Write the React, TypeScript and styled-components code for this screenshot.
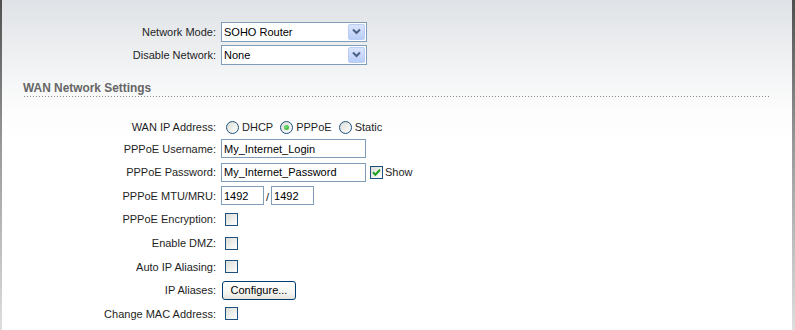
import React from 'react';
import styled, { createGlobalStyle } from 'styled-components';

const GlobalStyle = createGlobalStyle`
  html, body {
    margin: 0;
    padding: 0;
    background: #ffffff;
  }
  body {
    font-family: 'Liberation Sans', Arial, sans-serif;
    font-size: 11px;
    color: #222222;
  }
`;

const Frame = styled.div`
  box-sizing: border-box;
  width: 795px;
  height: 330px;
  overflow: hidden;
  border-style: solid;
  border-width: 0 3px 0 2px;
  border-image: linear-gradient(to bottom, #4f4f4f, #9a9a9a 45%, #dedede) 1;
  background: linear-gradient(to bottom, #dfe2e6 0px, #f6f7f8 85px, #fcfcfc 110px, #ffffff 140px);
  padding-top: 20px;
`;

const Form = styled.div<{ $top?: number }>`
  display: grid;
  grid-template-columns: 214px 1fr;
  column-gap: 5px;
  margin-top: ${p => p.$top ?? 0}px;
`;

const Row = styled.div<{ $h: number }>`
  display: contents;
  & > * {
    height: ${p => p.$h}px;
  }
`;

const Label = styled.div`
  display: flex;
  align-items: center;
  justify-content: flex-end;
  white-space: nowrap;
  color: #1e1e1e;
`;

const Field = styled.div`
  display: flex;
  align-items: center;
  white-space: nowrap;
`;

const SectionHeader = styled.div`
  margin: 16px 22px 0 21px;
  padding: 0 0 1px 0;
  font-weight: bold;
  font-size: 11.9px;
  line-height: 13px;
  color: #666666;
  background-image: linear-gradient(to right, #8a8a8a 1px, transparent 1px);
  background-size: 3px 1px;
  background-repeat: repeat-x;
  background-position: 1px bottom;
  height: 14px;
`;

const SelectBox = styled.div<{ $w: number }>`
  box-sizing: border-box;
  width: ${p => p.$w}px;
  height: 20px;
  border: 1px solid #7f9db9;
  background: #ffffff;
  display: flex;
  align-items: center;
  justify-content: space-between;
  padding: 0 1px 0 2px;
  color: #000000;
`;

const ArrowButton = styled.div`
  box-sizing: border-box;
  width: 17px;
  height: 16px;
  border: 1px solid #b9cdf5;
  border-radius: 2px;
  background: linear-gradient(to bottom, #dbe5fd, #b9cdf7);
  display: flex;
  align-items: center;
  justify-content: center;
`;

const TextInput = styled.div<{ $w: number }>`
  box-sizing: border-box;
  width: ${p => p.$w}px;
  height: 19px;
  border: 1px solid #7f9db9;
  background: #ffffff;
  padding: 0 2px;
  display: flex;
  align-items: center;
  color: #000000;
`;

const Slash = styled.span`
  margin: 0 2px 0 2px;
  padding-top: 2px;
`;

const Box = styled.span<{ $ml?: number }>`
  box-sizing: border-box;
  width: 13px;
  height: 13px;
  border: 1px solid #1c5180;
  background: linear-gradient(135deg, #dcdcd5, #ffffff);
  margin-left: ${p => p.$ml ?? 4}px;
  display: inline-flex;
  align-items: center;
  justify-content: center;
  flex: none;
`;

const BoxText = styled.span`
  margin-left: 2px;
  color: #1e1e1e;
`;

const RadioGroup = styled.div`
  display: flex;
  align-items: center;
  gap: 7px;
  padding-left: 5px;
`;

const RadioOption = styled.label`
  display: flex;
  align-items: center;
  gap: 3px;
  color: #1e1e1e;
`;

const RadioCircle = styled.span<{ $on?: boolean }>`
  box-sizing: border-box;
  width: 13px;
  height: 13px;
  border-radius: 50%;
  border: 1px solid #1c5180;
  background: linear-gradient(135deg, #dcdcd5, #ffffff);
  display: inline-flex;
  align-items: center;
  justify-content: center;
  &::after {
    content: '';
    display: ${p => (p.$on ? 'block' : 'none')};
    width: 5px;
    height: 5px;
    border-radius: 50%;
    background: radial-gradient(circle at 40% 40%, #7be07b, #21a121);
  }
`;

const Button = styled.div`
  box-sizing: border-box;
  margin-left: 1px;
  width: 74px;
  height: 19px;
  border: 1px solid #003c74;
  border-radius: 3px;
  background: linear-gradient(to bottom, #ffffff, #f3f3ef 70%, #e4e3dc);
  display: flex;
  align-items: center;
  justify-content: center;
  color: #000000;
`;

const Chevron = () => (
  <svg width="9" height="7" viewBox="0 0 9 7">
    <path d="M1 1.5 L4.5 5 L8 1.5" fill="none" stroke="#4d6185" strokeWidth="2" />
  </svg>
);

const Check = () => (
  <svg width="9" height="9" viewBox="0 0 9 9">
    <path d="M1 4.3 L3.4 6.8 L8 1.8" fill="none" stroke="#21a121" strokeWidth="2" />
  </svg>
);

const Select: React.FC<{ value: string }> = ({ value }) => (
  <SelectBox $w={146}>
    <span>{value}</span>
    <ArrowButton>
      <Chevron />
    </ArrowButton>
  </SelectBox>
);

const App: React.FC = () => {
  const rowH = 23.57;

  return (
    <>
      <GlobalStyle />
      <Frame>
        <Form>
          <Row $h={23}>
            <Label>Network Mode:</Label>
            <Field>
              <Select value="SOHO Router" />
            </Field>
          </Row>
          <Row $h={23}>
            <Label>Disable Network:</Label>
            <Field>
              <Select value="None" />
            </Field>
          </Row>
        </Form>

        <SectionHeader>WAN Network Settings</SectionHeader>

        <Form $top={20}>
          <Row $h={20}>
            <Label>WAN IP Address:</Label>
            <RadioGroup>
              <RadioOption>
                <RadioCircle />
                DHCP
              </RadioOption>
              <RadioOption>
                <RadioCircle $on />
                PPPoE
              </RadioOption>
              <RadioOption>
                <RadioCircle />
                Static
              </RadioOption>
            </RadioGroup>
          </Row>
          <Row $h={rowH}>
            <Label>PPPoE Username:</Label>
            <Field>
              <TextInput $w={145}>My_Internet_Login</TextInput>
            </Field>
          </Row>
          <Row $h={rowH}>
            <Label>PPPoE Password:</Label>
            <Field>
              <TextInput $w={145}>My_Internet_Password</TextInput>
              <Box $ml={4}>
                <Check />
              </Box>
              <BoxText>Show</BoxText>
            </Field>
          </Row>
          <Row $h={rowH}>
            <Label>PPPoE MTU/MRU:</Label>
            <Field>
              <TextInput $w={43}>1492</TextInput>
              <Slash>/</Slash>
              <TextInput $w={43}>1492</TextInput>
            </Field>
          </Row>
          <Row $h={rowH}>
            <Label>PPPoE Encryption:</Label>
            <Field>
              <Box />
            </Field>
          </Row>
          <Row $h={rowH}>
            <Label>Enable DMZ:</Label>
            <Field>
              <Box />
            </Field>
          </Row>
          <Row $h={rowH}>
            <Label>Auto IP Aliasing:</Label>
            <Field>
              <Box />
            </Field>
          </Row>
          <Row $h={rowH}>
            <Label>IP Aliases:</Label>
            <Field>
              <Button>Configure...</Button>
            </Field>
          </Row>
          <Row $h={rowH}>
            <Label>Change MAC Address:</Label>
            <Field>
              <Box />
            </Field>
          </Row>
        </Form>
      </Frame>
    </>
  );
};

export default App;
